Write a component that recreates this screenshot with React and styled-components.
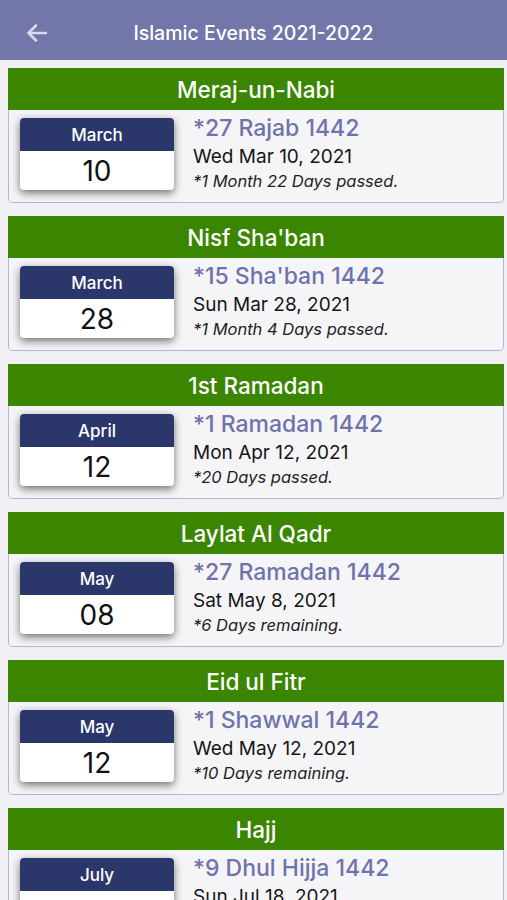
import React from "react"
import styled, { createGlobalStyle } from "styled-components"

const GlobalStyle = createGlobalStyle`
  body {
    margin: 0;
    background: #efeff4;
    font-family: Inter, "Liberation Sans", Arial, sans-serif;
  }
`

const Page = styled.div`
  width: 507px;
  height: 900px;
  overflow: hidden;
  background: #efeff4;
`

const TopBar = styled.header`
  height: 60px;
  background: #7276a8;
  display: grid;
  grid-template-columns: 64px 1fr 64px;
  align-items: center;
`

const BackButton = styled.button`
  border: none;
  background: none;
  padding: 6px 0 0 26px;
  display: flex;
  align-items: center;
  color: #d8d9ea;
`

const Title = styled.h1`
  margin: 0;
  text-align: center;
  color: #fff;
  font-size: 19.5px;
  font-weight: 500;
  padding-top: 6px;
`

const List = styled.div`
  display: flex;
  flex-direction: column;
  gap: 13px;
  padding: 8px 3px 0 8px;
`

const Card = styled.section`
  border: 1px solid #b4b5de;
  border-top: none;
  border-radius: 0 0 5px 5px;
  background: #f5f5f8;
`

const CardTitle = styled.div`
  height: 42px;
  background: #3a8600;
  color: #fff;
  font-size: 22.5px;
  font-weight: 500;
  display: flex;
  align-items: center;
  justify-content: center;
  margin: 0 -1px;
`

const CardBody = styled.div`
  display: flex;
  gap: 19px;
  padding: 8px 0 10px 11px;
`

const Calendar = styled.div`
  width: 154px;
  height: 72px;
  border-radius: 4px;
  overflow: hidden;
  background: #fff;
  box-shadow: 0 3px 8px rgba(0, 0, 0, 0.55);
  display: flex;
  flex-direction: column;
  flex-shrink: 0;
`

const Month = styled.div`
  height: 33px;
  background: #2b366b;
  color: #fff;
  font-size: 17px;
  font-weight: 500;
  display: flex;
  align-items: center;
  justify-content: center;
`

const Day = styled.div`
  flex: 1;
  display: flex;
  align-items: center;
  justify-content: center;
  color: #111;
  font-size: 28px;
  padding-top: 1px;
`

const Info = styled.div`
  display: flex;
  flex-direction: column;
`

const Hijri = styled.div`
  color: #6f73ab;
  font-size: 23px;
  font-weight: 500;
  line-height: 28px;
  margin-top: -4px;
`

const Gregorian = styled.div`
  color: #161616;
  font-size: 19px;
  line-height: 26px;
  margin-top: 2px;
`

const Status = styled.div`
  color: #222;
  font-size: 16.5px;
  font-style: italic;
  line-height: 22px;
`

const events = [
  { name: "Meraj-un-Nabi", month: "March", day: "10", hijri: "*27 Rajab 1442", date: "Wed Mar 10, 2021", status: "*1 Month 22 Days passed." },
  { name: "Nisf Sha'ban", month: "March", day: "28", hijri: "*15 Sha'ban 1442", date: "Sun Mar 28, 2021", status: "*1 Month 4 Days passed." },
  { name: "1st Ramadan", month: "April", day: "12", hijri: "*1 Ramadan 1442", date: "Mon Apr 12, 2021", status: "*20 Days passed." },
  { name: "Laylat Al Qadr", month: "May", day: "08", hijri: "*27 Ramadan 1442", date: "Sat May 8, 2021", status: "*6 Days remaining." },
  { name: "Eid ul Fitr", month: "May", day: "12", hijri: "*1 Shawwal 1442", date: "Wed May 12, 2021", status: "*10 Days remaining." },
  { name: "Hajj", month: "July", day: "18", hijri: "*9 Dhul Hijja 1442", date: "Sun Jul 18, 2021", status: "*3 Months remaining." },
]

function BackArrow() {
  return (
    <svg width="22" height="20" viewBox="0 0 22 20" fill="none">
      <path d="M20 10H3M10 2.5L2.5 10L10 17.5" stroke="currentColor" strokeWidth="2.6" strokeLinecap="round" strokeLinejoin="round" />
    </svg>
  )
}

export default function App() {
  return (
    <Page>
      <GlobalStyle />
      <TopBar>
        <BackButton>
          <BackArrow />
        </BackButton>
        <Title>Islamic Events 2021-2022</Title>
        <span />
      </TopBar>
      <List>
        {events.map((ev) => (
          <Card key={ev.name}>
            <CardTitle>{ev.name}</CardTitle>
            <CardBody>
              <Calendar>
                <Month>{ev.month}</Month>
                <Day>{ev.day}</Day>
              </Calendar>
              <Info>
                <Hijri>{ev.hijri}</Hijri>
                <Gregorian>{ev.date}</Gregorian>
                <Status>{ev.status}</Status>
              </Info>
            </CardBody>
          </Card>
        ))}
      </List>
    </Page>
  )
}
